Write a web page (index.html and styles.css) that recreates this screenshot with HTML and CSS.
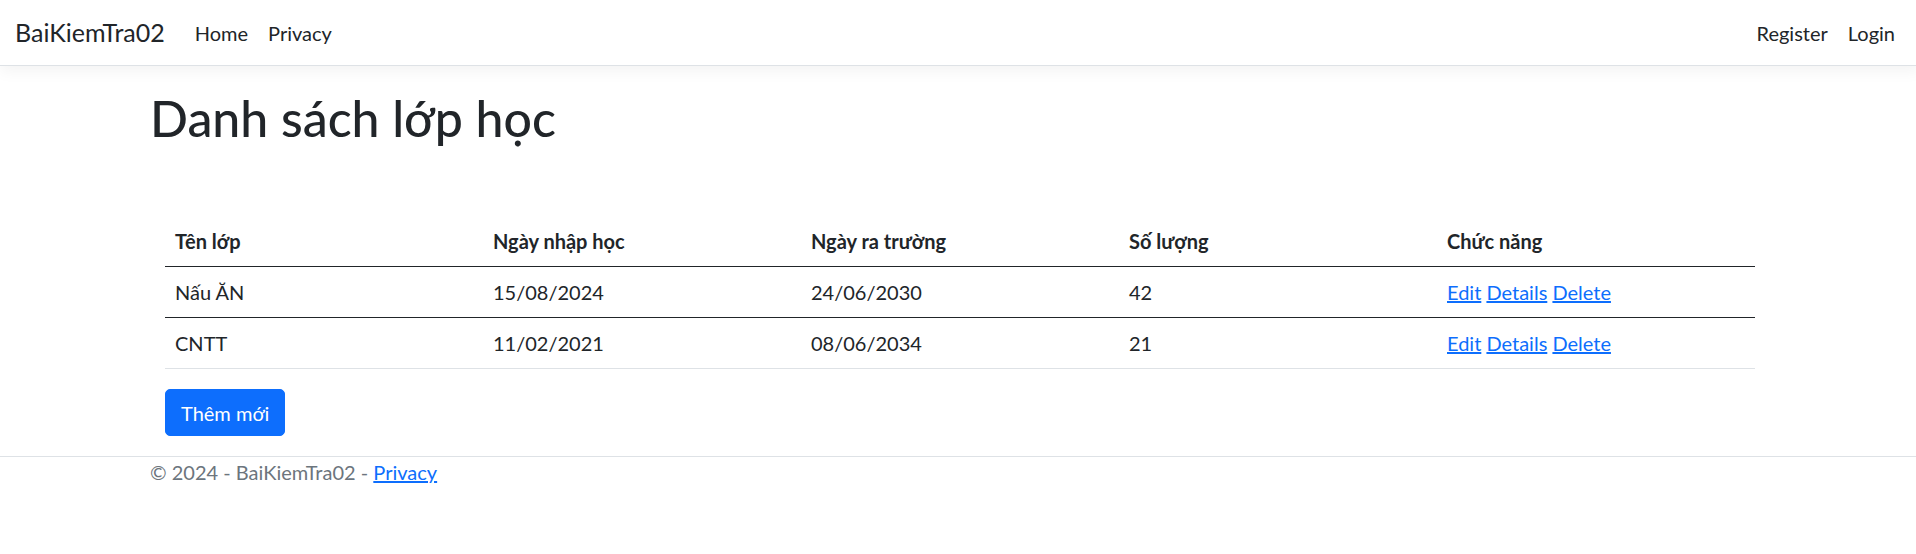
FILE: index.html
```html
<!DOCTYPE html>
<html lang="vi">
<head>
<meta charset="utf-8">
<title>Danh sách lớp học - BaiKiemTra02</title>
<link rel="stylesheet" href="styles.css">
</head>
<body>
<header>
  <nav class="navbar">
    <div class="navbar-inner">
      <a class="brand" href="#">BaiKiemTra02</a>
      <ul class="nav">
        <li><a class="nav-link" href="#">Home</a></li>
        <li><a class="nav-link" href="#">Privacy</a></li>
      </ul>
      <ul class="nav nav-right">
        <li><a class="nav-link" href="#">Register</a></li>
        <li><a class="nav-link" href="#">Login</a></li>
      </ul>
    </div>
  </nav>
</header>
<div class="container">
  <main class="main">
    <h1 class="title">Danh sách lớp học</h1>
    <div class="inner">
      <table class="table">
        <thead>
          <tr><th>Tên lớp</th><th>Ngày nhập học</th><th>Ngày ra trường</th><th>Số lượng</th><th>Chức năng</th></tr>
        </thead>
        <tbody>
          <tr><td>Nấu ĂN</td><td>15/08/2024</td><td>24/06/2030</td><td>42</td><td><a href="#">Edit</a> <a href="#">Details</a> <a href="#">Delete</a></td></tr>
          <tr><td>CNTT</td><td>11/02/2021</td><td>08/06/2034</td><td>21</td><td><a href="#">Edit</a> <a href="#">Details</a> <a href="#">Delete</a></td></tr>
        </tbody>
      </table>
      <div class="actions">
        <a class="btn" href="#">Thêm mới</a>
      </div>
    </div>
  </main>
</div>
<footer class="footer">
  <div class="container">© 2024 - BaiKiemTra02 - <a href="#">Privacy</a></div>
</footer>
</body>
</html>
```
FILE: styles.css
```css
html {
  font-size: 20px;
  overflow: hidden;
}
* {
  box-sizing: border-box;
}
body {
  margin: 0;
  width: 1920px;
  font-family: Lato, "Open Sans", "Noto Sans", sans-serif;
  font-size: 20px;
  line-height: 1.5;
  color: #212529;
  background: #fff;
}
a {
  color: #0d6efd;
}
.navbar {
  background: #fff;
  border-bottom: 1px solid #dee2e6;
  box-shadow: 0 5px 15px rgba(0, 0, 0, 0.05);
  margin-bottom: 20px;
}
.navbar-inner {
  display: flex;
  align-items: center;
  padding: 7.5px 15px;
}
.brand {
  font-size: 25px;
  line-height: 37.5px;
  padding: 6px 0;
  margin-right: 20px;
  color: #212529;
  text-decoration: none;
}
.nav {
  display: flex;
  list-style: none;
  margin: 0;
  padding: 0;
}
.nav-right {
  margin-left: auto;
}
.nav-link {
  display: block;
  padding: 10px 10px;
  color: #212529;
  text-decoration: none;
}
.container {
  max-width: 1650px;
  margin: 0 auto;
  padding: 0 15px;
}
.main {
  padding-bottom: 20px;
}
.title {
  font-size: 50px;
  font-weight: 500;
  line-height: 1.2;
  margin: 0;
  padding-top: 2px;
}
.inner {
  padding: 0 15px;
  margin-top: 68px;
}
.table {
  width: 100%;
  table-layout: fixed;
  border-collapse: collapse;
  margin-bottom: 20px;
  color: #212529;
}
.table th,
.table td {
  text-align: left;
  padding: 10px;
  border-bottom: 1px solid #212529;
  vertical-align: top;
}
.table tbody tr:last-child td {
  border-bottom-color: #dee2e6;
}
.table th {
  font-weight: 700;
}
.actions {
  display: flex;
}
.btn {
  display: inline-block;
  padding: 7.5px 15px;
  font-size: 20px;
  line-height: 30px;
  color: #fff;
  background: #0d6efd;
  border: 1px solid #0d6efd;
  border-radius: 5px;
  text-decoration: none;
}
.footer {
  border-top: 1px solid #dee2e6;
  color: #6c757d;
  white-space: nowrap;
}
```
